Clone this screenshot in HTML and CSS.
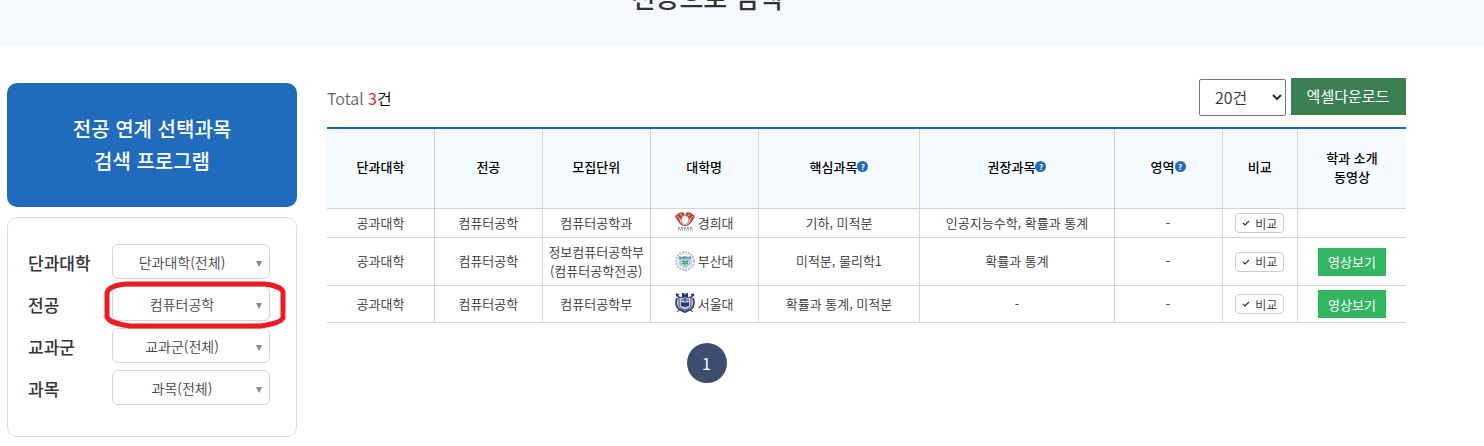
FILE: index.html
```html
<!DOCTYPE html>
<html lang="ko">
<head>
    <meta charset="UTF-8">
    <meta name="viewport" content="width=device-width, initial-scale=1.0">
    <title>전공으로 검색</title>
    <link rel="stylesheet" href="styles.css">
</head>
<body>

<header class="page-title">
    <h1>전공으로 검색</h1>
</header>

<div class="container">
    <aside class="sidebar">
        <h2>전공 연계 선택과목<br>검색 프로그램</h2>
        <form class="filter">
            <div class="field">
                <label for="college">단과대학</label>
                <span class="select-box">
                    <select id="college"><option>단과대학(전체)</option></select>
                </span>
            </div>
            <div class="field">
                <label for="major">전공</label>
                <span class="select-box">
                    <select id="major"><option>컴퓨터공학</option></select>
                    <svg class="marker" viewBox="0 0 182 48" aria-hidden="true">
                        <path d="M22 3H160C170 4 178 7 179 11V37C177 41 169 43 156 45H26C13 43 5 41 3 36V12C4 7 11 4 22 3Z"/>
                    </svg>
                </span>
            </div>
            <div class="field">
                <label for="group">교과군</label>
                <span class="select-box">
                    <select id="group"><option>교과군(전체)</option></select>
                </span>
            </div>
            <div class="field">
                <label for="subject">과목</label>
                <span class="select-box">
                    <select id="subject"><option>과목(전체)</option></select>
                </span>
            </div>
        </form>
    </aside>

    <main class="content">
        <div class="toolbar">
            <p class="total">Total <strong>3</strong><span>건</span></p>
            <div class="tools">
                <select class="page-size" aria-label="목록 개수"><option>20건</option></select>
                <button type="button" class="excel">엑셀다운로드</button>
            </div>
        </div>

        <table class="result">
            <colgroup>
                <col class="w10"><col class="w10"><col class="w10"><col class="w10">
                <col class="w15"><col class="w18"><col class="w10"><col class="w7"><col class="w10">
            </colgroup>
            <thead>
                <tr>
                    <th>단과대학</th>
                    <th>전공</th>
                    <th>모집단위</th>
                    <th>대학명</th>
                    <th><span class="head">핵심과목<button type="button" class="help">?</button></span></th>
                    <th><span class="head">권장과목<button type="button" class="help">?</button></span></th>
                    <th><span class="head">영역<button type="button" class="help">?</button></span></th>
                    <th>비교</th>
                    <th>학과 소개<br>동영상</th>
                </tr>
            </thead>
            <tbody>
                <tr>
                    <td>공과대학</td>
                    <td>컴퓨터공학</td>
                    <td>컴퓨터공학과</td>
                    <td>
                        <div class="univ">
                            <svg viewBox="0 0 20 20" aria-hidden="true">
                                <path fill="#b0483a" d="M0 4 4 1 8 0 10 3 12 0 16 1 20 4 18 8 15 12 12 14H8L5 12 2 8Z"/>
                                <path fill="none" stroke="#e9c3ad" d="M2 4 6 8M5 2 8 5M18 4 14 8M15 2 12 5"/>
                                <path fill="#fff" stroke="#d9947c" d="M10 3C5 6 5 10 10 13 15 10 15 6 10 3Z"/>
                                <path fill="none" stroke="#f4dfd2" d="M5 7C5 10 7 12 9 13M15 7C15 10 13 12 11 13"/>
                                <path fill="none" stroke="#7f88b3" stroke-width="1.5" stroke-dasharray="2 1" d="M3 16H18"/>
                                <path fill="none" stroke="#a4abc9" stroke-width="1.5" stroke-dasharray="1 1" d="M3 18H18"/>
                            </svg>
                            경희대
                        </div>
                    </td>
                    <td>기하, 미적분</td>
                    <td>인공지능수학, 확률과 통계</td>
                    <td>-</td>
                    <td class="action">
                        <button type="button" class="compare">
                            <svg viewBox="0 0 8 8" aria-hidden="true"><path d="M1 4 3 6 7 2"/></svg>비교
                        </button>
                    </td>
                    <td></td>
                </tr>
                <tr class="two-line">
                    <td>공과대학</td>
                    <td>컴퓨터공학</td>
                    <td>정보컴퓨터공학부<br>(컴퓨터공학전공)</td>
                    <td>
                        <div class="univ">
                            <svg viewBox="0 0 20 20" aria-hidden="true">
                                <circle cx="10" cy="10" r="9" fill="#f3f6fb" stroke="#9fb1d6" stroke-width="1.5" stroke-dasharray="2 1"/>
                                <circle cx="10" cy="10" r="7" fill="none" stroke="#d3dcee"/>
                                <path fill="#7890c4" d="M4 5 7 6 10 5 13 6 16 5V8H4Z"/>
                                <path fill="#b9e2c9" stroke="#8fb4c0" d="M5 8H15V13L10 16 5 13Z"/>
                                <path fill="none" stroke="#3fa874" stroke-width="1.5" d="M7 10 10 11 13 10M7 12 10 13 13 12"/>
                            </svg>
                            부산대
                        </div>
                    </td>
                    <td>미적분, 물리학1</td>
                    <td>확률과 통계</td>
                    <td>-</td>
                    <td class="action">
                        <button type="button" class="compare">
                            <svg viewBox="0 0 8 8" aria-hidden="true"><path d="M1 4 3 6 7 2"/></svg>비교
                        </button>
                    </td>
                    <td class="action"><button type="button" class="video">영상보기</button></td>
                </tr>
                <tr>
                    <td>공과대학</td>
                    <td>컴퓨터공학</td>
                    <td>컴퓨터공학부</td>
                    <td>
                        <div class="univ">
                            <svg viewBox="0 0 20 20" aria-hidden="true">
                                <path fill="none" stroke="#26386a" stroke-width="1.5" d="M1 2 6 6M19 2 14 6M1 1 4 2M19 1 16 2"/>
                                <path fill="none" stroke="#33457a" stroke-width="2" d="M2 5C0 11 2 16 6 17L10 19 14 17C18 16 20 11 18 5"/>
                                <path fill="#c9d0e2" stroke="#26386a" d="M4 4 10 5 16 4V12C16 15 12 16 10 17 8 16 4 15 4 12Z"/>
                                <path fill="#26386a" d="M7 0H9L10 2 11 0H13V4H7ZM6 9 10 10 14 9V13L10 14 6 13Z"/>
                                <path fill="none" stroke="#33457a" d="M6 7H14M10 5V14M2 19 6 16M18 19 14 16"/>
                            </svg>
                            서울대
                        </div>
                    </td>
                    <td>확률과 통계, 미적분</td>
                    <td>-</td>
                    <td>-</td>
                    <td class="action">
                        <button type="button" class="compare">
                            <svg viewBox="0 0 8 8" aria-hidden="true"><path d="M1 4 3 6 7 2"/></svg>비교
                        </button>
                    </td>
                    <td class="action"><button type="button" class="video">영상보기</button></td>
                </tr>
            </tbody>
        </table>

        <nav class="paging">
            <a href="#">1</a>
        </nav>
    </main>
</div>

</body>
</html>
```
FILE: styles.css
```css
/* Base */
* {
    box-sizing: border-box;
    margin: 0;
    padding: 0;
}
body {
    font-family: "Noto Sans CJK KR", sans-serif;
    font-size: 13px;
    color: #333;
    background-color: #fff;
}
button, select {
    font-family: inherit;
}

/* Page title */
.page-title {
    display: flex;
    align-items: flex-end;
    height: 45px;
    padding-bottom: 35px;
    background-color: #f5f9fd;
    overflow: hidden;
}
.page-title h1 {
    width: 100%;
    max-width: 1414px;
    font-size: 26px;
    font-weight: 500;
    line-height: 26px;
    text-align: center;
}

/* Layout */
.container {
    display: flex;
    align-items: flex-start;
    gap: 30px;
    max-width: 1406px;
    padding: 33px 0 0 7px;
}
.sidebar {
    flex: none;
    width: 290px;
    padding-top: 5px;
}
.content {
    flex: 1;
    min-width: 0;
}

/* Sidebar */
.sidebar h2 {
    padding: 30px 0;
    border-radius: 10px;
    background-color: #206bbb;
    color: #fff;
    font-size: 20px;
    font-weight: 500;
    line-height: 32px;
    text-align: center;
}
.filter {
    display: flex;
    flex-direction: column;
    gap: 7px;
    margin-top: 10px;
    padding: 26px 26px 31px 20px;
    border: 1px solid #ddd;
    border-radius: 10px;
}
.field {
    display: flex;
    align-items: center;
    justify-content: space-between;
}
.field label {
    padding-top: 3px;
    font-size: 17px;
    font-weight: 500;
    line-height: 24px;
}
.select-box {
    position: relative;
    width: 158px;
    height: 35px;
}
.select-box select {
    width: 100%;
    height: 100%;
    padding-right: 18px;
    border: 1px solid #d5d5d5;
    border-radius: 6px;
    background-color: #fff;
    color: #444;
    font-size: 14px;
    font-weight: 350;
    text-align: center;
    text-align-last: center;
    appearance: none;
}
.select-box::after {
    content: "";
    position: absolute;
    top: 17px;
    right: 8px;
    border: solid transparent;
    border-width: 6px 3px 0;
    border-top-color: #888;
    pointer-events: none;
}
.marker {
    position: absolute;
    z-index: 1;
    top: -5px;
    left: -8px;
    width: 182px;
    height: 48px;
    fill: none;
    stroke: #ed1c24;
    stroke-width: 5px;
    pointer-events: none;
}

/* Toolbar */
.toolbar {
    display: flex;
    justify-content: space-between;
    align-items: center;
    height: 49px;
    padding-bottom: 12px;
}
.total {
    padding-top: 2px;
    color: #666;
    font-size: 16px;
    font-weight: 350;
}
.total strong {
    color: #d92525;
    font-weight: 400;
}
.total span {
    color: #000;
}
.tools {
    display: flex;
    gap: 5px;
}
.page-size {
    width: 87px;
    height: 37px;
    margin-top: 1px;
    padding-left: 11px;
    border: 1px solid #767676;
    border-radius: 2px;
    background-color: #fff;
    color: #333;
    font-size: 16px;
    font-weight: 350;
}
.excel {
    width: 115px;
    height: 37px;
    border: 0;
    border-right: 1px solid #3a8a1c;
    border-bottom: 1px solid #3a8a1c;
    background-color: #3b8054;
    color: #fff;
    font-size: 15px;
}

/* Result table */
.result {
    width: 100%;
    border-top: 2px solid #1a63c6;
    border-spacing: 0;
    table-layout: fixed;
}
.w7 { width: 7%; }
.w10 { width: 10%; }
.w15 { width: 15%; }
.w18 { width: 18%; }
.result th,
.result td {
    border-right: 1px solid #d5d5d5;
    border-bottom: 1px solid #d5d5d5;
    line-height: 19px;
    text-align: center;
    vertical-align: middle;
}
.result th:last-child,
.result td:last-child {
    border-right: 0;
}
.result th {
    height: 80px;
    padding-bottom: 4px;
    background-color: #f6fbff;
    color: #000;
    font-weight: 500;
}
.result td {
    padding: 3px 0 5px;
    font-weight: 350;
}
.result .action {
    padding: 4px 0;
}
.result .two-line td {
    height: 48px;
}
.head {
    display: flex;
    align-items: center;
    justify-content: center;
}
.help {
    width: 11px;
    height: 11px;
    border: 0;
    border-radius: 50%;
    background-color: #206bbb;
    color: #fff;
    font-size: 8px;
    font-weight: 700;
    line-height: 11px;
}
.univ {
    display: flex;
    align-items: center;
    justify-content: center;
    gap: 3px;
}
.univ svg {
    width: 20px;
    height: 20px;
}
.compare {
    display: flex;
    align-items: center;
    justify-content: center;
    gap: 5px;
    width: 49px;
    height: 20px;
    margin: 0 auto;
    border: 1px solid #ccc;
    border-radius: 4px;
    background-color: #fff;
    color: #333;
    font-size: 12px;
    font-weight: 350;
}
.compare svg {
    width: 8px;
    height: 8px;
    fill: none;
    stroke: #333;
    stroke-width: 1.2;
}
.video {
    display: block;
    width: 68px;
    height: 28px;
    margin: 0 auto;
    border: 0;
    background-color: #33b561;
    color: #fff;
    font-size: 13px;
}

/* Paging */
.paging {
    display: flex;
    justify-content: center;
    padding: 20px 320px 0 0;
}
.paging a {
    width: 40px;
    height: 40px;
    border-radius: 50%;
    background-color: #3e4e6e;
    color: #fff;
    font-size: 16px;
    line-height: 40px;
    text-align: center;
    text-decoration: none;
}
```
